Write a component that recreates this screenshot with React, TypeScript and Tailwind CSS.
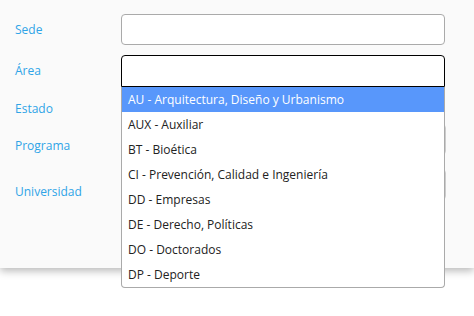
import React from "react";

const options = [
  "AU - Arquitectura, Diseño y Urbanismo",
  "AUX - Auxiliar",
  "BT - Bioética",
  "CI - Prevención, Calidad e Ingeniería",
  "DD - Empresas",
  "DE - Derecho, Políticas",
  "DO - Doctorados",
  "DP - Deporte",
];

function Label({ children, className = "" }: { children: React.ReactNode; className?: string }) {
  return <div className={`w-[106px] shrink-0 text-[12px] text-[#2fa4e7] ${className}`}>{children}</div>;
}

export default function App() {
  return (
    <div className="min-h-[316px] bg-white font-['Open_Sans',sans-serif]">
      <div className="relative h-[268px] bg-[#fafafa] pl-[15px] pt-[14px] shadow-[0_3px_8px_rgba(0,0,0,0.28)]">
        {/* Sede */}
        <div className="flex h-[31px] items-center">
          <Label>Sede</Label>
          <div className="h-[31px] w-[324px] rounded-[4px] border border-[#aaa] bg-white" />
        </div>

        {/* Área (open select) */}
        <div className="mt-[10px] flex h-[32px] items-center">
          <Label>Área</Label>
          <div className="relative h-[32px] w-[324px] rounded-t-[4px] border border-black bg-white">
            <ul className="absolute left-[-1px] top-[31px] z-10 w-[324px] rounded-b-[4px] border border-t-0 border-[#aaa] bg-white">
              {options.map((o, i) => (
                <li
                  key={o}
                  className={`flex h-[25px] items-center whitespace-nowrap px-[6px] text-[12px] ${
                    i === 0 ? "bg-[#5897fb] text-white" : "text-[#222]"
                  }`}
                >
                  {o}
                </li>
              ))}
            </ul>
          </div>
        </div>

        {/* Estado */}
        <div className="mt-[4px] flex h-[31px] items-center">
          <Label className="mt-[5px]">Estado</Label>
          <div className="h-[31px] w-[323px]" />
        </div>

        {/* Programa */}
        <div className="mt-[2px] flex h-[31px] items-center">
          <Label className="mt-[13px]">Programa</Label>
          <div className="h-[31px] w-[325px] rounded-[4px] border border-[#ccc] bg-white" />
        </div>

        {/* Universidad */}
        <div className="mt-[14px] flex h-[31px] items-center">
          <Label className="mt-[15px]">Universidad</Label>
          <div className="h-[31px] w-[325px] rounded-[4px] border border-[#ccc] bg-white" />
        </div>
      </div>
    </div>
  );
}
